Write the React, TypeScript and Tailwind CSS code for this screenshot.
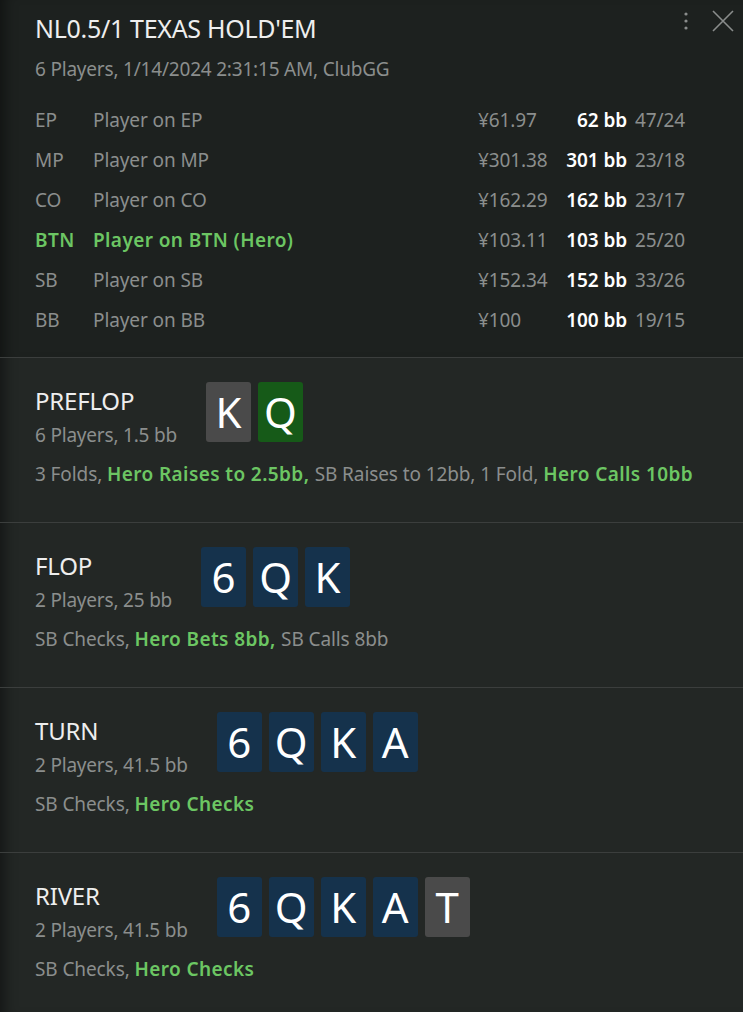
import React from 'react';

type Card = { rank: string; kind: 'hole' | 'heroHole' | 'board' | 'new' };

interface Player {
  pos: string;
  name: string;
  money: string;
  bb: string;
  stats: string;
  hero?: boolean;
}

interface Street {
  title: string;
  info: string;
  cards: Card[];
  actions: { text: string; hero?: boolean }[];
}

const players: Player[] = [
  { pos: 'EP', name: 'Player on EP', money: '¥61.97', bb: '62 bb', stats: '47/24' },
  { pos: 'MP', name: 'Player on MP', money: '¥301.38', bb: '301 bb', stats: '23/18' },
  { pos: 'CO', name: 'Player on CO', money: '¥162.29', bb: '162 bb', stats: '23/17' },
  { pos: 'BTN', name: 'Player on BTN (Hero)', money: '¥103.11', bb: '103 bb', stats: '25/20', hero: true },
  { pos: 'SB', name: 'Player on SB', money: '¥152.34', bb: '152 bb', stats: '33/26' },
  { pos: 'BB', name: 'Player on BB', money: '¥100', bb: '100 bb', stats: '19/15' },
];

const board = (ranks: string[], last?: string): Card[] => [
  ...ranks.map((r) => ({ rank: r, kind: 'board' as const })),
  ...(last ? [{ rank: last, kind: 'new' as const }] : []),
];

const streets: Street[] = [
  {
    title: 'PREFLOP',
    info: '6 Players, 1.5 bb',
    cards: [
      { rank: 'K', kind: 'hole' },
      { rank: 'Q', kind: 'heroHole' },
    ],
    actions: [
      { text: '3 Folds, ' },
      { text: 'Hero Raises to 2.5bb, ', hero: true },
      { text: 'SB Raises to 12bb, 1 Fold, ' },
      { text: 'Hero Calls 10bb', hero: true },
    ],
  },
  {
    title: 'FLOP',
    info: '2 Players, 25 bb',
    cards: board(['6', 'Q', 'K']),
    actions: [
      { text: 'SB Checks, ' },
      { text: 'Hero Bets 8bb, ', hero: true },
      { text: 'SB Calls 8bb' },
    ],
  },
  {
    title: 'TURN',
    info: '2 Players, 41.5 bb',
    cards: board(['6', 'Q', 'K', 'A']),
    actions: [{ text: 'SB Checks, ' }, { text: 'Hero Checks', hero: true }],
  },
  {
    title: 'RIVER',
    info: '2 Players, 41.5 bb',
    cards: board(['6', 'Q', 'K', 'A'], 'T'),
    actions: [{ text: 'SB Checks, ' }, { text: 'Hero Checks', hero: true }],
  },
];

const cardColor = (kind: Card['kind']) => {
  switch (kind) {
    case 'heroHole': return 'bg-[#165a18]';
    case 'board': return 'bg-[#15324c]';
    default: return 'bg-[#4a4a4a]';
  }
};

const App: React.FC = () => {
  return (
    <div
      className="w-[743px] h-[1012px] overflow-hidden bg-[#232725] text-[#8b8e8d] shadow-[inset_14px_0_14px_-10px_rgba(0,0,0,0.45)]"
      style={{ fontFamily: '"Noto Sans", "Open Sans", sans-serif' }}
    >
      {/* Header */}
      <div className="relative h-[358px] bg-[#1d211f] border-b border-[#3b3e3d] pl-[35px] pr-[47px] pt-[10px] shadow-[inset_14px_0_14px_-10px_rgba(0,0,0,0.45)]">
        <div className="absolute right-[8px] top-[9px] flex items-center gap-[22px]">
          <svg width="6" height="22" viewBox="0 0 6 22">
            <circle cx="3" cy="4" r="1.6" fill="#8a8d8c" />
            <circle cx="3" cy="11" r="1.6" fill="#8a8d8c" />
            <circle cx="3" cy="18" r="1.6" fill="#8a8d8c" />
          </svg>
          <svg width="24" height="24" viewBox="0 0 24 24">
            <path d="M2 2 L22 22 M22 2 L2 22" stroke="#8a8d8c" strokeWidth="1.6" fill="none" />
          </svg>
        </div>

        <h1 className="text-[25px] leading-[36px] text-[#eeeeee] font-normal tracking-[-0.3px]">NL0.5/1 TEXAS HOLD'EM</h1>
        <p className="text-[19px] leading-[28px] mt-[9px] tracking-[-0.2px]">6 Players, 1/14/2024 2:31:15 AM, ClubGG</p>

        <div className="mt-[17px] flex flex-col">
          {players.map((p) => (
            <div
              key={p.pos}
              className={`flex items-center h-[40px] text-[19px] ${p.hero ? 'text-[#6cc663] font-semibold tracking-[0.4px]' : 'tracking-[-0.1px]'}`}
            >
              <span className="w-[58px]">{p.pos}</span>
              <span className="flex-1">{p.name}</span>
              <span className="w-[79px] text-[#8b8e8d] font-normal tracking-[-0.1px]">{p.money}</span>
              <span className="w-[70px] text-right text-white font-semibold tracking-[-0.1px]">{p.bb}</span>
              <span className="w-[69px] pl-[8px] text-[#8b8e8d] font-normal tracking-[-0.1px]">{p.stats}</span>
            </div>
          ))}
        </div>
      </div>

      {/* Streets */}
      {streets.map((s) => (
        <div key={s.title} className="h-[165px] border-b border-[#3b3e3d] pl-[35px] pt-[24px]">
          <div className="flex items-start gap-[29px]">
            <div className="flex flex-col mt-[3px]">
              <span className="text-[24px] leading-[32px] text-[#eeeeee] tracking-[-0.2px]">{s.title}</span>
              <span className="text-[19px] leading-[28px] mt-[4px] tracking-[-0.2px]">{s.info}</span>
            </div>
            <div className="flex gap-[7px]">
              {s.cards.map((c, i) => (
                <div
                  key={i}
                  className={`w-[45px] h-[60px] rounded-[3px] flex items-center justify-center text-white text-[42px] leading-none ${cardColor(c.kind)}`}
                >
                  {c.rank}
                </div>
              ))}
            </div>
          </div>
          <p className="mt-[11px] text-[19px] leading-[28px] tracking-[-0.1px]">
            {s.actions.map((a, i) => (
              <span key={i} className={a.hero ? 'text-[#6cc663] font-semibold tracking-[0.4px]' : ''}>{a.text}</span>
            ))}
          </p>
        </div>
      ))}
    </div>
  );
};

export default App;
